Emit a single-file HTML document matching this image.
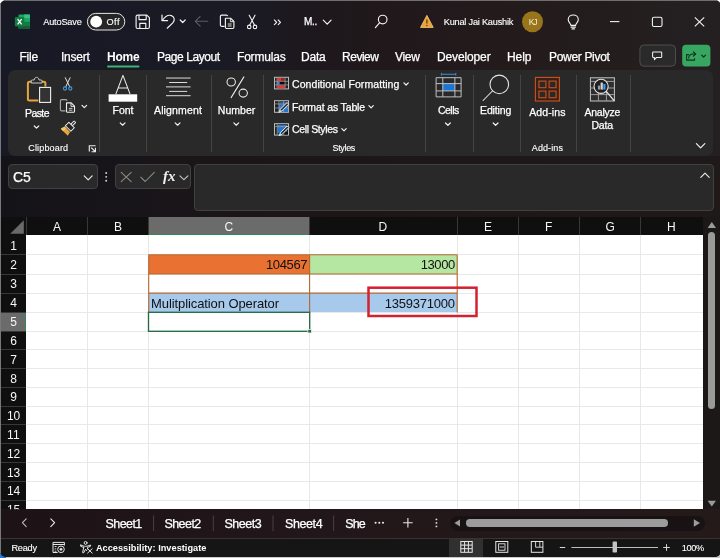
<!DOCTYPE html>
<html lang="en"><head><meta charset="utf-8"><title>Excel</title>
<style>
html,body{margin:0;padding:0;}
body{width:720px;height:558px;overflow:hidden;background:linear-gradient(180deg,#ffffff 0%,#ffffff 50%,#c9c9c9 100%);}
#win{position:absolute;left:0;top:0;width:720px;height:558px;overflow:hidden;}
.t{position:absolute;white-space:pre;display:block;}
.a{position:absolute;}
svg{position:absolute;overflow:visible;}
.sep{top:75px;width:1px;height:77px;background:#444444;}
.box{background:#292929;border:1px solid #414141;box-sizing:border-box;border-radius:4px;}
#txt{position:absolute;left:0;top:0;width:720px;height:558px;will-change:transform;}

</style></head>
<body>
<div id="win">
<!-- window chrome -->
<div class="a" id="bluecorner" style="left:0;top:549px;width:6px;height:9px;background:#2a78d6;"></div>
<div class="a" id="frame" style="left:0;top:0;width:720.5px;height:556.5px;border-radius:6px 6px 6px 6px;background:linear-gradient(90deg,#171925 0%,#1a1a24 32%,#1d181e 42%,#20181a 53%,#231b1c 75%,#242021 100%);"></div>
<div class="a" style="left:4px;top:0;width:712px;height:1px;background:#6f6f72;"></div>
<div class="a" style="left:0;top:3px;width:1px;height:550px;background:#77777c;"></div>

<!-- ribbon panel -->
<div class="a" id="ribbon" style="left:7.7px;top:69.8px;width:705.3px;height:86.4px;background:#292929;border-radius:7px;"></div>
<!-- ribbon separators -->
<div class="a sep" style="left:99px;"></div>
<div class="a sep" style="left:146px;"></div>
<div class="a sep" style="left:210.5px;"></div>
<div class="a sep" style="left:263px;"></div>
<div class="a sep" style="left:424.5px;"></div>
<div class="a sep" style="left:472.5px;"></div>
<div class="a sep" style="left:519.5px;"></div>
<div class="a sep" style="left:575.5px;"></div>
<div class="a sep" style="left:629.5px;"></div>

<!-- formula bar area -->
<div class="a" style="left:1px;top:156px;width:719px;height:61px;background:linear-gradient(90deg,#141318 0%,#18151a 18%,#1b1517 32%,#1d1717 60%,#1f1919 100%);"></div>
<div class="a box" style="left:8px;top:164px;width:89.6px;height:25px;"></div>
<div class="a box" style="left:115px;top:164px;width:75.6px;height:25px;"></div>
<div class="a box" style="left:194px;top:164px;width:520px;height:47px;"></div>

<!-- grid -->
<div class="a" id="grid" style="left:1px;top:217px;width:701.6px;height:292px;background:#fff;"></div>
<!-- column header strip -->
<div class="a" style="left:1px;top:217px;width:701.6px;height:18.3px;background:#0f0f0f;"></div>
<!-- row header strip -->
<div class="a" style="left:1px;top:217px;width:25.2px;height:292px;background:#0f0f0f;"></div>
<!-- selected headers -->
<div class="a" style="left:148.3px;top:217px;width:161.2px;height:18.3px;background:#6b6b6b;border-bottom:1.5px solid #2e8b57;box-sizing:border-box;"></div>
<div class="a" style="left:1px;top:312.3px;width:25.2px;height:19.0px;background:#6b6b6b;border-right:1.5px solid #2e8b57;box-sizing:border-box;"></div>
<!-- select-all triangle -->
<svg style="left:1px;top:217px" width="26" height="19" viewBox="0 0 26 19"><path d="M22.8 3.2 L22.8 16.8 L9.2 16.8 Z" fill="#6a6a6a"/></svg>
<!-- header separators + grid lines (svg) -->
<svg id="lines" style="left:0;top:0" width="720" height="558" viewBox="0 0 720 558" shape-rendering="crispEdges">
<g stroke="#e8e8e8" stroke-width="1">
<line x1="87.5" y1="235.3" x2="87.5" y2="509"/>
<line x1="148.3" y1="235.3" x2="148.3" y2="509"/>
<line x1="309.5" y1="235.3" x2="309.5" y2="509"/>
<line x1="457.3" y1="235.3" x2="457.3" y2="509"/>
<line x1="518.5" y1="235.3" x2="518.5" y2="509"/>
<line x1="579.6" y1="235.3" x2="579.6" y2="509"/>
<line x1="640.7" y1="235.3" x2="640.7" y2="509"/>
<line x1="26.2" y1="254.7" x2="702.6" y2="254.7"/>
<line x1="26.2" y1="274.0" x2="702.6" y2="274.0"/>
<line x1="26.2" y1="293.1" x2="702.6" y2="293.1"/>
<line x1="26.2" y1="312.3" x2="702.6" y2="312.3"/>
<line x1="26.2" y1="331.3" x2="702.6" y2="331.3"/>
<line x1="26.2" y1="349.8" x2="702.6" y2="349.8"/>
<line x1="26.2" y1="368.5" x2="702.6" y2="368.5"/>
<line x1="26.2" y1="387.3" x2="702.6" y2="387.3"/>
<line x1="26.2" y1="406.1" x2="702.6" y2="406.1"/>
<line x1="26.2" y1="424.9" x2="702.6" y2="424.9"/>
<line x1="26.2" y1="443.7" x2="702.6" y2="443.7"/>
<line x1="26.2" y1="462.5" x2="702.6" y2="462.5"/>
<line x1="26.2" y1="481.3" x2="702.6" y2="481.3"/>
<line x1="26.2" y1="500.3" x2="702.6" y2="500.3"/>
</g>
<g stroke="#383838" stroke-width="1">
<line x1="26.2" y1="217" x2="26.2" y2="235.3"/>
<line x1="87.5" y1="217" x2="87.5" y2="235.3"/>
<line x1="148.3" y1="217" x2="148.3" y2="235.3"/>
<line x1="309.5" y1="217" x2="309.5" y2="235.3"/>
<line x1="457.3" y1="217" x2="457.3" y2="235.3"/>
<line x1="518.5" y1="217" x2="518.5" y2="235.3"/>
<line x1="579.6" y1="217" x2="579.6" y2="235.3"/>
<line x1="640.7" y1="217" x2="640.7" y2="235.3"/>
<line x1="1" y1="254.7" x2="26.2" y2="254.7"/>
<line x1="1" y1="274.0" x2="26.2" y2="274.0"/>
<line x1="1" y1="293.1" x2="26.2" y2="293.1"/>
<line x1="1" y1="312.3" x2="26.2" y2="312.3"/>
<line x1="1" y1="331.3" x2="26.2" y2="331.3"/>
<line x1="1" y1="349.8" x2="26.2" y2="349.8"/>
<line x1="1" y1="368.5" x2="26.2" y2="368.5"/>
<line x1="1" y1="387.3" x2="26.2" y2="387.3"/>
<line x1="1" y1="406.1" x2="26.2" y2="406.1"/>
<line x1="1" y1="424.9" x2="26.2" y2="424.9"/>
<line x1="1" y1="443.7" x2="26.2" y2="443.7"/>
<line x1="1" y1="462.5" x2="26.2" y2="462.5"/>
<line x1="1" y1="481.3" x2="26.2" y2="481.3"/>
<line x1="1" y1="500.3" x2="26.2" y2="500.3"/>
</g>
</svg>

<!-- cell fills -->
<div class="a" style="left:148.5px;top:254.7px;width:161px;height:19.3px;background:#e97132;"></div>
<div class="a" style="left:309.8px;top:254.7px;width:147.4px;height:19.3px;background:#b5e6a2;"></div>
<div class="a" style="left:148.5px;top:293.1px;width:161px;height:19.2px;background:#a6c9ec;"></div>
<div class="a" style="left:309.8px;top:293.1px;width:147.4px;height:19.2px;background:#a6c9ec;"></div>
<!-- brown borders -->
<svg style="left:0;top:0" width="720" height="558" viewBox="0 0 720 558">
<g stroke="#b5682f" stroke-width="1.1" fill="none">
<path d="M148.5 254.7 H457.3 M148.5 274.0 H457.3 M148.5 293.1 H457.3 M148.7 254.39999999999998 V312.3 M309.6 254.39999999999998 V312.3 M457.2 254.39999999999998 V312.6"/>
</g>
<!-- selection -->
<rect x="148.5" y="312.3" width="161.2" height="19.0" fill="none" stroke="#226b45" stroke-width="1.35"/>
<rect x="307.9" y="329.4" width="3.6" height="3.6" fill="#226b45" stroke="#fff" stroke-width="0.7"/>
<!-- red highlight box -->
<rect x="368.5" y="287.7" width="108" height="28.3" fill="none" stroke="#d4202f" stroke-width="2.5"/>
</svg>

<!-- vertical scrollbar -->
<div class="a" style="left:702.6px;top:217px;width:18px;height:292px;background:#1c1818;"></div>
<div class="a" style="left:708.3px;top:232px;width:7px;height:177px;border-radius:3.5px;background:#9a9a9a;"></div>
<svg style="left:0;top:0" width="720" height="558" viewBox="0 0 720 558">
<path d="M711.8 222 L716 228 L707.6 228 Z" fill="#9a9a9a"/>
<path d="M711.8 506.6 L716 500.8 L707.6 500.8 Z" fill="#9a9a9a"/>
</svg>

<!-- sheet tab bar -->
<div class="a" style="left:1px;top:509px;width:719px;height:28.5px;background:linear-gradient(90deg,#1d1316 0%,#21171a 40%,#241a1a 100%);"></div>
<div class="a" style="left:450px;top:515.5px;width:255px;height:15.5px;border-radius:7.5px;background:#181214;"></div>
<div class="a" style="left:465.5px;top:519.2px;width:202.3px;height:7.5px;border-radius:3.75px;background:#9c9c9c;"></div>
<!-- status bar -->
<div class="a" style="left:1px;top:537.5px;width:719px;height:19px;background:#151515;border-top:1px solid #3a3234;box-sizing:border-box;border-radius:0 0 5px 5px;"></div>
<div class="a" style="left:449.4px;top:538.5px;width:33.6px;height:18px;background:#303030;"></div>

<svg style="left:0;top:0" width="720" height="70" viewBox="0 0 720 70" fill="none">
<!-- excel logo -->
<g>
<rect x="18.5" y="14.5" width="11.4" height="14.6" rx="1" fill="#21a366"/>
<rect x="24.2" y="14.5" width="5.7" height="3.7" fill="#33c481"/>
<rect x="24.2" y="18.2" width="5.7" height="3.6" fill="#21a366"/>
<rect x="24.2" y="21.8" width="5.7" height="3.7" fill="#107c41"/>
<rect x="18.5" y="25.5" width="11.4" height="3.6" rx="1" fill="#185c37"/>
<rect x="18.5" y="21.8" width="5.7" height="3.7" fill="#107c41"/>
<rect x="14.9" y="17" width="9.4" height="9.6" rx="1" fill="#107c41"/>
<path d="M17.6 19.2 L21.6 24.4 M21.6 19.2 L17.6 24.4" stroke="#fff" stroke-width="1.3"/>
</g>
<!-- autosave toggle -->
<rect x="87.4" y="13.4" width="37.4" height="16.6" rx="8.3" fill="#262626" stroke="#e6e6e6" stroke-width="1"/>
<circle cx="96.2" cy="21.7" r="5.9" fill="#fff"/>
<!-- save icon -->
<g stroke="#f2f2f2" stroke-width="1.15" stroke-linejoin="round">
<path d="M137.6 15.1 H146.8 L149.4 17.7 V27 Q149.4 28.5 147.9 28.5 H137.6 Q136.1 28.5 136.1 27 V16.6 Q136.1 15.1 137.6 15.1 Z"/>
<path d="M139 15.1 V19.6 H146.2 V15.1"/>
<path d="M139.8 28.5 V23.4 H145.8 V28.5"/>
</g>
<!-- undo -->
<g stroke="#f2f2f2" stroke-width="1.2" stroke-linecap="round" stroke-linejoin="round">
<path d="M162 15 V20.6 H167.6"/>
<path d="M162.4 20.3 C165 16.6 168.6 14.6 171.4 15.6 C174.6 16.8 175.2 20.4 172.8 22.8 L167.2 28.2"/>
<path d="M180.2 20 L182.7 22.5 L185.2 20" stroke-width="1.2"/>
</g>
<!-- back arrow (disabled) -->
<path d="M207.8 21.3 H195.4 M200.2 16.4 L195.3 21.3 L200.2 26.2" stroke="#5c5c62" stroke-width="1.1" stroke-linecap="round" stroke-linejoin="round"/>
<!-- copy -->
<g stroke="#f2f2f2" stroke-width="1.15" stroke-linejoin="round">
<path d="M224.6 26.3 H221.6 Q220.4 26.3 220.4 25.1 V16.3 Q220.4 15.1 221.6 15.1 H226.4 Q227.4 15.1 227.6 16.2"/>
<path d="M225.4 18.2 H230.6 L233.9 21.5 V27.3 Q233.9 28.5 232.7 28.5 H226.6 Q225.4 28.5 225.4 27.3 Z" fill="#1c1b20"/>
<path d="M230.4 18.4 V21.7 H233.7" stroke-width="0.9"/>
<path d="M227.8 24 H231.6 M227.8 26 H231.6" stroke-width="0.9"/>
</g>
<!-- scissors -->
<g stroke="#f2f2f2" stroke-width="1.1" stroke-linecap="round">
<path d="M249.2 15.2 L254.6 25.2 M255 15.2 L249.6 25.2"/>
<circle cx="249.2" cy="26.9" r="1.75"/>
<circle cx="255" cy="26.9" r="1.75"/>
</g>
<!-- >> -->
<path d="M274.4 20 L276.7 22.3 L274.4 24.6 M278.2 20 L280.5 22.3 L278.2 24.6" stroke="#f2f2f2" stroke-width="1.1" stroke-linecap="round" stroke-linejoin="round"/>
<!-- chevron after M.. -->
<path d="M323.3 20.2 L327.2 24.2 L331.1 20.2" stroke="#f2f2f2" stroke-width="1.2" stroke-linecap="round" stroke-linejoin="round"/>
<!-- search -->
<g stroke="#f2f2f2" stroke-width="1.15" stroke-linecap="round">
<circle cx="382.7" cy="19.5" r="4.3"/>
<path d="M379.7 22.7 L375.4 27.7"/>
</g>
<!-- warning -->
<path d="M426.9 15.4 L433.2 27.4 H420.6 Z" fill="#e8a33b" stroke="#f3c170" stroke-width="0.9" stroke-linejoin="round"/>
<path d="M426.9 19.4 V23.6" stroke="#5a3a12" stroke-width="1.3"/>
<circle cx="426.9" cy="25.5" r="0.75" fill="#5a3a12"/>
<!-- avatar -->
<circle cx="532.5" cy="21.75" r="10.5" fill="#98751a"/>
<!-- lightbulb -->
<g stroke="#f2f2f2" stroke-width="1.1" stroke-linecap="round" stroke-linejoin="round">
<path d="M570.9 25.4 C570.9 23.4 568.2 22.6 568.2 19.6 C568.2 16.8 570.5 15 573.25 15 C576 15 578.3 16.8 578.3 19.6 C578.3 22.6 575.6 23.4 575.6 25.4 Z"/>
<path d="M571 27.1 H575.5 M572 28.9 H574.5"/>
</g>
<!-- window controls -->
<path d="M610 21.6 H619.4" stroke="#f2f2f2" stroke-width="1.1"/>
<rect x="652.4" y="17.3" width="9.6" height="9.2" rx="1.6" stroke="#f2f2f2" stroke-width="1.1"/>
<path d="M694.8 17.4 L704.2 26.4 M704.2 17.4 L694.8 26.4" stroke="#f2f2f2" stroke-width="1.1"/>
<!-- home underline -->
<rect x="107" y="65.6" width="32.5" height="2" rx="1" fill="#3fb276"/>
<!-- comments button -->
<rect x="639.9" y="45" width="35.6" height="21.2" rx="4" fill="#2a2a2a" stroke="#4e4e4e" stroke-width="1"/>
<path d="M653.2 51.9 H661.1 Q661.7 51.9 661.7 52.5 V56.8 Q661.7 57.4 661.1 57.4 H656.6 L654.4 59.7 V57.4 H653.2 Q652.6 57.4 652.6 56.8 V52.5 Q652.6 51.9 653.2 51.9 Z" stroke="#f2f2f2" stroke-width="1.05" stroke-linejoin="round"/>
<!-- share button -->
<rect x="682.2" y="44.7" width="28.2" height="21.8" rx="3.8" fill="#37a660"/>
<g stroke="#13301f" stroke-width="1.05" stroke-linecap="round" stroke-linejoin="round">
<path d="M688.6 54.6 H686.6 V60.1 H694.6 V58.4"/>
<path d="M688.6 58.2 C689 55.6 690.6 54 693 54 H695.4 M693.4 51.8 L695.7 54 L693.4 56.2"/>
<path d="M701.6 55.1 L703.6 57 L705.6 55.1" stroke-width="1.2"/>
</g>
</svg>

<svg style="left:0;top:0" width="720" height="160" viewBox="0 0 720 160" fill="none">
<!-- paste: clipboard -->
<path d="M38.4 100.4 H29.4 Q27.9 100.4 27.9 98.9 V83.2 Q27.9 81.7 29.4 81.7 H43.9 Q45.4 81.7 45.4 83.2 V86.4" stroke="#e8a33b" stroke-width="2" stroke-linejoin="round"/>
<path d="M31.2 83 V81 Q31.2 80 32.2 80 H34.2 C34.4 78.2 35.3 77.3 36.6 77.3 C37.9 77.3 38.8 78.2 39 80 H41 Q42 80 42 81 V83 Z" stroke="#c8c8c8" stroke-width="1" fill="#292929" stroke-linejoin="round"/>
<rect x="39.6" y="87.4" width="11" height="15" fill="#333333" stroke="#f0f0f0" stroke-width="1.1"/>
<path d="M34.3 126 L36.5 128.2 L38.7 126" stroke="#f2f2f2" stroke-width="1.2" stroke-linecap="round" stroke-linejoin="round"/>
<!-- cut -->
<g stroke-linecap="round">
<path d="M65.3 77.7 L69.6 86.6 M70.1 77.7 L65.8 86.6" stroke="#e4e4e4" stroke-width="1"/>
<circle cx="65" cy="88.5" r="1.6" stroke="#3c9ae8" stroke-width="1.1"/>
<circle cx="70.3" cy="88.5" r="1.6" stroke="#3c9ae8" stroke-width="1.1"/>
</g>
<!-- copy -->
<g stroke-linejoin="round">
<path d="M65.4 110.9 H61.6 Q60.4 110.9 60.4 109.7 V100.8 Q60.4 99.6 61.6 99.6 H65.8 Q66.9 99.6 67.1 100.8" stroke="#a8a8a8" stroke-width="1.1"/>
<path d="M66.5 102.9 H71.2 L74.5 106.2 V111.2 Q74.5 112.3 73.4 112.3 H67.6 Q66.5 112.3 66.5 111.2 Z" stroke="#f0f0f0" stroke-width="1.1" fill="#2c2c2c"/>
<path d="M71 103.1 V106.4 H74.3" stroke="#f0f0f0" stroke-width="0.9"/>
<path d="M68.8 108.4 H72.4 M68.8 110.2 H72.4" stroke="#d8d8d8" stroke-width="0.9"/>
</g>
<path d="M82 105.4 L84.3 107.7 L86.6 105.4" stroke="#f2f2f2" stroke-width="1.2" stroke-linecap="round" stroke-linejoin="round"/>
<!-- format painter: drawn upright then rotated 45deg -->
<g transform="translate(68.3 128.3) rotate(45)">
<rect x="-1.15" y="-9.3" width="2.3" height="4.6" rx="0.5" stroke="#f0f0f0" stroke-width="0.95" fill="#292929"/>
<path d="M-3.9 -4.7 H3.9 V0.3 H-3.9 Z" stroke="#f0f0f0" stroke-width="0.95" fill="#262626" stroke-linejoin="round"/>
<path d="M-3.9 1.4 H3.9 L4.9 5.7 H-4.9 Z" fill="#e8a33b"/>
<path d="M-3.9 1.4 L-4.9 5.7 H-1.6 L-1.2 1.4 Z" fill="#f3c468"/>
</g>
<!-- launcher -->
<g stroke="#ececec" stroke-width="1.15" stroke-linecap="square">
<path d="M89.3 151 V145.7 H95"/>
<path d="M91.6 148 L95 151.4 M95.4 148.4 V151.7 H92.1"/>
</g>
<!-- font A -->
<path d="M116 93.6 L122.95 75.4 L129.9 93.6 M118.3 88 H127.7" stroke="#ececec" stroke-width="1.05" stroke-linejoin="round" stroke-linecap="round"/>
<rect x="108.6" y="94.3" width="28.6" height="7.4" fill="#ffffff"/>
<path d="M120.2 122.9 L122.6 125.2 L125 122.9" stroke="#f2f2f2" stroke-width="1.2" stroke-linecap="round" stroke-linejoin="round"/>
<!-- alignment -->
<g stroke="#dcdcdc" stroke-width="1">
<path d="M166 78.05 H190.6 M169.2 82.5 H187.2 M166 86.9 H190.6 M169.2 91.4 H187.2 M166 95.7 H190.6"/>
</g>
<path d="M175.2 122.9 L177.6 125.2 L180 122.9" stroke="#f2f2f2" stroke-width="1.2" stroke-linecap="round" stroke-linejoin="round"/>
<!-- percent -->
<g stroke="#ececec" stroke-width="1.05">
<ellipse cx="231.2" cy="82" rx="4.2" ry="4"/>
<ellipse cx="243.2" cy="93.1" rx="4.2" ry="4"/>
<path d="M243.9 76.9 L231.1 97.6" stroke-linecap="round"/>
</g>
<path d="M233.85 122.9 L236.25 125.2 L238.65 122.9" stroke="#f2f2f2" stroke-width="1.2" stroke-linecap="round" stroke-linejoin="round"/>
<!-- conditional formatting icon -->
<g>
<rect x="274.5" y="77.3" width="14" height="11.6" fill="#222222" stroke="#bdbdbd" stroke-width="1"/>
<rect x="277.4" y="77.9" width="3.6" height="3.2" fill="#e23838"/>
<rect x="281" y="77.9" width="3.8" height="3.2" fill="#8c2a2a"/>
<rect x="277" y="81.6" width="2.6" height="3" fill="#3b83d6"/>
<rect x="280" y="81.6" width="4.8" height="3" fill="#0c0c0c"/>
<rect x="277.4" y="85.2" width="7.4" height="3.2" fill="#e23838"/>
<path d="M277 77.3 V88.9 M285.1 77.3 V88.9 M274.5 81.3 H288.5 M274.5 84.9 H288.5" stroke="#9a9a9a" stroke-width="0.8"/>
</g>
<!-- format as table icon -->
<g>
<rect x="274.5" y="100.7" width="14" height="11.6" fill="#222222" stroke="#bdbdbd" stroke-width="1"/>
<rect x="279" y="103.8" width="9.2" height="8.2" fill="#2277cf"/>
<rect x="280" y="101.6" width="7" height="2" fill="#1f5e9e"/>
<path d="M274.5 103.9 H288.5 M274.5 108 H288.5 M278.9 100.7 V112.3 M283.6 100.7 V112.3" stroke="#9a9a9a" stroke-width="0.8"/>
<g transform="translate(283.6 107.6) rotate(45)">
<path d="M-1.15 -6 H1.15 V3.6 L0 6.6 L-1.15 3.6 Z" fill="#2a2a2a" stroke="#ffffff" stroke-width="0.9" stroke-linejoin="round"/>
<path d="M-1.1 3.8 L0 6.6 L1.1 3.8 Z" fill="#9fd0f5"/>
</g>
</g>
<!-- cell styles icon -->
<g>
<rect x="274.5" y="123.7" width="14" height="11.4" fill="#222222" stroke="#bdbdbd" stroke-width="1"/>
<rect x="277.6" y="125" width="9.4" height="8.2" fill="#2277cf"/>
<path d="M277.2 123.7 V135.1 M274.5 126.6 H288.5" stroke="#9a9a9a" stroke-width="0.8"/>
<rect x="284.6" y="131.6" width="3.4" height="3" fill="#111111"/>
<g transform="translate(283.8 131) rotate(45)">
<path d="M-1.15 -6 H1.15 V3.6 L0 6.6 L-1.15 3.6 Z" fill="#2a2a2a" stroke="#ffffff" stroke-width="0.9" stroke-linejoin="round"/>
<path d="M-1.1 3.8 L0 6.6 L1.1 3.8 Z" fill="#9fd0f5"/>
</g>
</g>
<!-- small chevrons after style items -->
<g stroke="#f2f2f2" stroke-width="1.2" stroke-linecap="round" stroke-linejoin="round">
<path d="M403.9 82.8 L406.1 85 L408.3 82.8"/>
<path d="M368.9 105.6 L371.1 107.8 L373.3 105.6"/>
<path d="M341.8 128.6 L344 130.8 L346.2 128.6"/>
</g>
<!-- cells icon -->
<g>
<path d="M441.4 74.25 H455.8 M441.4 72.9 V75.6 M455.8 72.9 V75.6" stroke="#3c8fdc" stroke-width="1"/>
<rect x="442.8" y="83.6" width="12.1" height="7.3" fill="#1a76d2"/>
<path d="M436.1 77.7 H461.1 V96.9 H436.1 Z M442.8 77.7 V96.9 M454.9 77.7 V96.9 M436.1 83.6 H461.1 M436.1 90.9 H461.1" stroke="#c0c0c0" stroke-width="1"/>
</g>
<path d="M445.5 123 L447.9 125.3 L450.3 123" stroke="#f2f2f2" stroke-width="1.2" stroke-linecap="round" stroke-linejoin="round"/>
<!-- editing magnifier -->
<g stroke="#e8e8e8" stroke-width="1.05" stroke-linecap="round">
<circle cx="499.3" cy="84.4" r="9.3"/>
<path d="M492.4 91 L483.1 100.5"/>
</g>
<path d="M493.2 123 L495.6 125.3 L498 123" stroke="#f2f2f2" stroke-width="1.2" stroke-linecap="round" stroke-linejoin="round"/>
<!-- add-ins icon -->
<g stroke="#c9531f" stroke-width="1.1">
<rect x="535.4" y="77.4" width="24" height="23.6" fill="#3a2118"/>
<rect x="538.9" y="81.1" width="7" height="6.6" fill="#292929"/>
<rect x="549.1" y="81.1" width="7" height="6.6" fill="#292929"/>
<rect x="538.9" y="91.1" width="7" height="6.6" fill="#292929"/>
<rect x="549.1" y="91.1" width="7" height="6.6" fill="#292929"/>
</g>
<!-- analyze data icon -->
<g>
<rect x="590.4" y="77.8" width="24" height="23.2" fill="#2e2e2e" stroke="#c4c4c4" stroke-width="1"/>
<path d="M590.4 81.4 H614.4 M590.4 88 H614.4 M590.4 94.6 H614.4 M598.4 81.4 V101 M606.4 81.4 V101" stroke="#a8a8a8" stroke-width="0.9"/>
<circle cx="601.1" cy="86.3" r="7.1" fill="#1f1f1f" stroke="#e6e6e6" stroke-width="1.1"/>
<path d="M606.4 91.6 L613.9 100.4" stroke="#e6e6e6" stroke-width="1.3" stroke-linecap="round"/>
<rect x="597.9" y="85.6" width="2.2" height="4" fill="#9a9a9a"/>
<rect x="600.6" y="82.6" width="2.2" height="7" fill="#d6d6d6"/>
<rect x="603.3" y="84" width="2.2" height="5.6" fill="#3c9ae8"/>
</g>
<!-- collapse ribbon chevron -->
<path d="M696.4 143.6 L700.6 147.8 L704.8 143.6" stroke="#f2f2f2" stroke-width="1.2" stroke-linecap="round" stroke-linejoin="round"/>
</svg>

<svg style="left:0;top:0" width="720" height="558" viewBox="0 0 720 558" fill="none">
<!-- name box chevron -->
<path d="M84.2 175.8 L88.2 179.8 L92.2 175.8" stroke="#e8e8e8" stroke-width="1.2" stroke-linecap="round" stroke-linejoin="round"/>
<!-- dots -->
<g fill="#d8d8d8"><circle cx="106.2" cy="173" r="0.95"/><circle cx="106.2" cy="176.85" r="0.95"/><circle cx="106.2" cy="180.7" r="0.95"/></g>
<!-- cancel / enter -->
<path d="M121.2 172.3 L131.2 181.6 M131.2 172.3 L121.2 181.6" stroke="#8c8c8c" stroke-width="1.05" stroke-linecap="round"/>
<path d="M140.8 177.2 L145.2 181.5 L154.3 172.4" stroke="#8c8c8c" stroke-width="1.05" stroke-linecap="round" stroke-linejoin="round"/>
<path d="M179.9 175.8 L183.9 179.6 L187.9 175.8" stroke="#c8c8c8" stroke-width="1.1" stroke-linecap="round" stroke-linejoin="round"/>
<!-- formula bar collapse chevron -->
<path d="M700.8 177.4 L705 173.2 L709.2 177.4" stroke="#e8e8e8" stroke-width="1.2" stroke-linecap="round" stroke-linejoin="round"/>
<!-- sheet nav -->
<path d="M26.2 518.8 L22.4 522.7 L26.2 526.6" stroke="#bdbdbd" stroke-width="1.1" stroke-linecap="round" stroke-linejoin="round"/>
<path d="M50.8 518.8 L54.6 522.7 L50.8 526.6" stroke="#e8e8e8" stroke-width="1.1" stroke-linecap="round" stroke-linejoin="round"/>
<!-- tab separators -->
<g stroke="#4a3f41" stroke-width="1"><path d="M153.6 515.5 V531 M213.3 515.5 V531 M273 515.5 V531 M333.6 515.5 V531"/></g>
<!-- ... + and dots -->
<g fill="#e8e8e8"><circle cx="375.6" cy="522.8" r="1.05"/><circle cx="379.3" cy="522.8" r="1.05"/><circle cx="383" cy="522.8" r="1.05"/></g>
<path d="M403.1 522.8 H412.7 M407.9 518 V527.6" stroke="#e8e8e8" stroke-width="1.1"/>
<g fill="#d8d8d8"><circle cx="436.4" cy="519.4" r="0.95"/><circle cx="436.4" cy="522.9" r="0.95"/><circle cx="436.4" cy="526.4" r="0.95"/></g>
<!-- h scroll arrows -->
<path d="M454.4 523 L460 519.4 V526.6 Z" fill="#9c9c9c"/>
<path d="M700 523 L693.8 519.2 V526.8 Z" fill="#9c9c9c"/>
<!-- status icons placeholder group -->

<!-- macro record icon -->
<g stroke="#e6e6e6" stroke-width="1" >
<path d="M57.6 552.5 H53 V542.4 H64.4 V545.6"/>
<path d="M53 544.5 H64.4"/>
<path d="M54.6 546.5 H56.6 M54.6 548.9 H56.2 M54.6 551.2 H56.4" stroke-width="0.9"/>
<circle cx="61" cy="549.3" r="3.3" fill="#171717"/>
<circle cx="61" cy="549.3" r="1.4" fill="#e6e6e6" stroke="none"/>
</g>
<!-- accessibility icon -->
<g stroke="#e6e6e6" stroke-width="1" stroke-linecap="round" stroke-linejoin="round">
<circle cx="85.6" cy="542.9" r="1.45"/>
<path d="M80.8 545 C82.4 545.9 84 546.3 85.6 546.3 C87.2 546.3 88.8 545.9 90.4 545 L90.8 546 C89.6 546.8 88.4 547.2 87.5 547.4 L87.6 549 M83.7 547.4 C82.8 547.2 81.6 546.8 80.4 546 L80.8 545 M83.7 547.4 L82.6 552.6 L83.6 552.9 L85.6 549.2 L86.6 550.6"/>
<path d="M87.6 548.7 L92.2 553.1 M92.2 548.7 L87.6 553.1" stroke-width="1"/>
</g>
<!-- view buttons -->
<g stroke="#e6e6e6" stroke-width="1">
<rect x="460.8" y="541.5" width="11.4" height="10.8"/>
<path d="M464.6 541.5 V552.3 M468.4 541.5 V552.3 M460.8 545.1 H472.2 M460.8 548.7 H472.2"/>
<rect x="495.8" y="541.5" width="12" height="10.8"/>
<rect x="498.6" y="543.8" width="6.4" height="6.4" stroke-width="0.9"/>
<path d="M499.6 547 H504" stroke-width="0.9"/>
<rect x="531.3" y="541.5" width="11.6" height="10.8"/>
<path d="M535.6 541.5 V547.2 H539.8 V541.5 M539.8 547.2 H542.9" stroke-width="0.9"/>
</g>
<!-- zoom slider -->
<g stroke="#d8d8d8" stroke-width="1">
<path d="M559.8 547.5 H565.2"/>
<path d="M571.4 547.5 H658" stroke="#bdbdbd"/>
<path d="M663.2 547.5 H669.8 M666.5 544.2 V550.8"/>
</g>
<rect x="612.6" y="541.6" width="4.4" height="11" rx="0.8" fill="#c4c4c4"/>

</svg>


<div id="txt">
<span class="t" style="left:43.2px;top:18.10px;font-family:'Liberation Sans', sans-serif;font-size:9.2px;line-height:9.2px;font-weight:400;color:#fff;letter-spacing:-0.17px;-webkit-text-stroke:0.12px #fff;">AutoSave</span>
<span class="t" style="left:106.5px;top:18.00px;font-family:'Liberation Sans', sans-serif;font-size:9.2px;line-height:9.2px;font-weight:400;color:#fff;letter-spacing:0.47px;-webkit-text-stroke:0.12px #fff;">Off</span>
<span class="t" style="left:303.9px;top:17.40px;font-family:'Liberation Sans', sans-serif;font-size:10px;line-height:10px;font-weight:400;color:#fff;letter-spacing:-0.26px;-webkit-text-stroke:0.25px #fff;">M..</span>
<span class="t" style="left:443.8px;top:18.10px;font-family:'Liberation Sans', sans-serif;font-size:9.2px;line-height:9.2px;font-weight:400;color:#fff;letter-spacing:-0.22px;-webkit-text-stroke:0.12px #fff;">Kunal Jai Kaushik</span>
<span class="t" style="left:528.8px;top:17.90px;font-family:'Liberation Sans', sans-serif;font-size:8.6px;line-height:8.6px;font-weight:400;color:#f4ecd8;letter-spacing:-1.27px;">KJ</span>
<span class="t" style="left:19.5px;top:51.00px;font-family:'Liberation Sans', sans-serif;font-size:12px;line-height:12px;font-weight:400;color:#fff;letter-spacing:-0.21px;-webkit-text-stroke:0.25px #fff;">File</span>
<span class="t" style="left:61.0px;top:51.00px;font-family:'Liberation Sans', sans-serif;font-size:12px;line-height:12px;font-weight:400;color:#fff;letter-spacing:-0.25px;-webkit-text-stroke:0.25px #fff;">Insert</span>
<span class="t" style="left:107.0px;top:51.00px;font-family:'Liberation Sans', sans-serif;font-size:12px;line-height:12px;font-weight:700;color:#fff;letter-spacing:-0.21px;">Home</span>
<span class="t" style="left:157.0px;top:51.00px;font-family:'Liberation Sans', sans-serif;font-size:12px;line-height:12px;font-weight:400;color:#fff;letter-spacing:-0.44px;-webkit-text-stroke:0.25px #fff;">Page Layout</span>
<span class="t" style="left:237.0px;top:51.00px;font-family:'Liberation Sans', sans-serif;font-size:12px;line-height:12px;font-weight:400;color:#fff;letter-spacing:-0.19px;-webkit-text-stroke:0.25px #fff;">Formulas</span>
<span class="t" style="left:301.0px;top:51.00px;font-family:'Liberation Sans', sans-serif;font-size:12px;line-height:12px;font-weight:400;color:#fff;letter-spacing:-0.21px;-webkit-text-stroke:0.25px #fff;">Data</span>
<span class="t" style="left:342.0px;top:51.00px;font-family:'Liberation Sans', sans-serif;font-size:12px;line-height:12px;font-weight:400;color:#fff;letter-spacing:-0.48px;-webkit-text-stroke:0.25px #fff;">Review</span>
<span class="t" style="left:395.0px;top:51.00px;font-family:'Liberation Sans', sans-serif;font-size:12px;line-height:12px;font-weight:400;color:#fff;letter-spacing:-0.32px;-webkit-text-stroke:0.25px #fff;">View</span>
<span class="t" style="left:437.0px;top:51.00px;font-family:'Liberation Sans', sans-serif;font-size:12px;line-height:12px;font-weight:400;color:#fff;letter-spacing:-0.13px;-webkit-text-stroke:0.25px #fff;">Developer</span>
<span class="t" style="left:507.0px;top:51.00px;font-family:'Liberation Sans', sans-serif;font-size:12px;line-height:12px;font-weight:400;color:#fff;letter-spacing:-0.05px;-webkit-text-stroke:0.25px #fff;">Help</span>
<span class="t" style="left:549.0px;top:51.00px;font-family:'Liberation Sans', sans-serif;font-size:12px;line-height:12px;font-weight:400;color:#fff;letter-spacing:-0.32px;-webkit-text-stroke:0.25px #fff;">Power Pivot</span>
<span class="t" style="left:25.0px;top:108.40px;font-family:'Liberation Sans', sans-serif;font-size:10.5px;line-height:10.5px;font-weight:400;color:#fff;letter-spacing:-0.59px;-webkit-text-stroke:0.25px #fff;">Paste</span>
<span class="t" style="left:28.3px;top:144.10px;font-family:'Liberation Sans', sans-serif;font-size:9px;line-height:9px;font-weight:400;color:#fff;letter-spacing:0.16px;-webkit-text-stroke:0.12px #fff;">Clipboard</span>
<span class="t" style="left:112.5px;top:105.40px;font-family:'Liberation Sans', sans-serif;font-size:10.5px;line-height:10.5px;font-weight:400;color:#fff;letter-spacing:-0.03px;-webkit-text-stroke:0.25px #fff;">Font</span>
<span class="t" style="left:154.0px;top:105.40px;font-family:'Liberation Sans', sans-serif;font-size:10.5px;line-height:10.5px;font-weight:400;color:#fff;letter-spacing:0.14px;-webkit-text-stroke:0.25px #fff;">Alignment</span>
<span class="t" style="left:217.8px;top:105.30px;font-family:'Liberation Sans', sans-serif;font-size:10.5px;line-height:10.5px;font-weight:400;color:#fff;letter-spacing:0.04px;-webkit-text-stroke:0.25px #fff;">Number</span>
<span class="t" style="left:292.0px;top:78.50px;font-family:'Liberation Sans', sans-serif;font-size:10.5px;line-height:10.5px;font-weight:400;color:#fff;letter-spacing:0.08px;-webkit-text-stroke:0.25px #fff;">Conditional Formatting</span>
<span class="t" style="left:292.0px;top:101.50px;font-family:'Liberation Sans', sans-serif;font-size:10.5px;line-height:10.5px;font-weight:400;color:#fff;letter-spacing:-0.14px;-webkit-text-stroke:0.25px #fff;">Format as Table</span>
<span class="t" style="left:292.0px;top:124.25px;font-family:'Liberation Sans', sans-serif;font-size:10.5px;line-height:10.5px;font-weight:400;color:#fff;letter-spacing:-0.37px;-webkit-text-stroke:0.25px #fff;">Cell Styles</span>
<span class="t" style="left:332.5px;top:144.30px;font-family:'Liberation Sans', sans-serif;font-size:9px;line-height:9px;font-weight:400;color:#fff;letter-spacing:-0.34px;-webkit-text-stroke:0.12px #fff;">Styles</span>
<span class="t" style="left:438.0px;top:105.10px;font-family:'Liberation Sans', sans-serif;font-size:10.5px;line-height:10.5px;font-weight:400;color:#fff;letter-spacing:-0.53px;-webkit-text-stroke:0.25px #fff;">Cells</span>
<span class="t" style="left:480.0px;top:105.10px;font-family:'Liberation Sans', sans-serif;font-size:10.5px;line-height:10.5px;font-weight:400;color:#fff;letter-spacing:-0.12px;-webkit-text-stroke:0.25px #fff;">Editing</span>
<span class="t" style="left:529.2px;top:107.00px;font-family:'Liberation Sans', sans-serif;font-size:10.5px;line-height:10.5px;font-weight:400;color:#fff;letter-spacing:0.1px;-webkit-text-stroke:0.25px #fff;">Add-ins</span>
<span class="t" style="left:531.8px;top:144.30px;font-family:'Liberation Sans', sans-serif;font-size:9px;line-height:9px;font-weight:400;color:#fff;letter-spacing:0.1px;-webkit-text-stroke:0.12px #fff;">Add-ins</span>
<span class="t" style="left:584.4px;top:107.00px;font-family:'Liberation Sans', sans-serif;font-size:10.5px;line-height:10.5px;font-weight:400;color:#fff;letter-spacing:-0.22px;-webkit-text-stroke:0.25px #fff;">Analyze</span>
<span class="t" style="left:591.4px;top:120.30px;font-family:'Liberation Sans', sans-serif;font-size:10.5px;line-height:10.5px;font-weight:400;color:#fff;letter-spacing:-0.2px;-webkit-text-stroke:0.25px #fff;">Data</span>
<span class="t" style="left:13.0px;top:170.00px;font-family:'Liberation Sans', sans-serif;font-size:14px;line-height:14px;font-weight:400;color:#fff;letter-spacing:-0.2px;-webkit-text-stroke:0.25px #fff;">C5</span>
<span class="t" style="left:163.0px;top:169.40px;font-family:'Liberation Serif', serif;font-size:15px;line-height:15px;font-weight:700;color:#f0f0f0;letter-spacing:-0.1px;font-style:italic;">fx</span>
<span class="t" style="left:52.9px;top:220.70px;font-family:'Liberation Sans', sans-serif;font-size:12px;line-height:12px;font-weight:400;color:#f6f6f6;letter-spacing:0.18px;">A</span>
<span class="t" style="left:113.9px;top:220.70px;font-family:'Liberation Sans', sans-serif;font-size:12px;line-height:12px;font-weight:400;color:#f6f6f6;letter-spacing:0.18px;">B</span>
<span class="t" style="left:224.6px;top:220.70px;font-family:'Liberation Sans', sans-serif;font-size:12px;line-height:12px;font-weight:400;color:#f6f6f6;letter-spacing:0.13px;">C</span>
<span class="t" style="left:378.6px;top:220.70px;font-family:'Liberation Sans', sans-serif;font-size:12px;line-height:12px;font-weight:400;color:#f6f6f6;letter-spacing:0.13px;">D</span>
<span class="t" style="left:483.9px;top:220.70px;font-family:'Liberation Sans', sans-serif;font-size:12px;line-height:12px;font-weight:400;color:#f6f6f6;letter-spacing:0.18px;">E</span>
<span class="t" style="left:544.9px;top:220.70px;font-family:'Liberation Sans', sans-serif;font-size:12px;line-height:12px;font-weight:400;color:#f6f6f6;letter-spacing:0.86px;">F</span>
<span class="t" style="left:605.6px;top:220.70px;font-family:'Liberation Sans', sans-serif;font-size:12px;line-height:12px;font-weight:400;color:#f6f6f6;letter-spacing:-0.54px;">G</span>
<span class="t" style="left:666.9px;top:220.70px;font-family:'Liberation Sans', sans-serif;font-size:12px;line-height:12px;font-weight:400;color:#f6f6f6;letter-spacing:-0.47px;">H</span>
<span class="t" style="left:10.2px;top:239.55px;font-family:'Liberation Sans', sans-serif;font-size:12px;line-height:12px;font-weight:400;color:#f6f6f6;letter-spacing:0.01px;">1</span>
<span class="t" style="left:10.2px;top:258.95px;font-family:'Liberation Sans', sans-serif;font-size:12px;line-height:12px;font-weight:400;color:#f6f6f6;letter-spacing:0.01px;">2</span>
<span class="t" style="left:10.2px;top:278.15px;font-family:'Liberation Sans', sans-serif;font-size:12px;line-height:12px;font-weight:400;color:#f6f6f6;letter-spacing:0.01px;">3</span>
<span class="t" style="left:10.2px;top:297.30px;font-family:'Liberation Sans', sans-serif;font-size:12px;line-height:12px;font-weight:400;color:#f6f6f6;letter-spacing:0.01px;">4</span>
<span class="t" style="left:10.2px;top:316.40px;font-family:'Liberation Sans', sans-serif;font-size:12px;line-height:12px;font-weight:400;color:#f6f6f6;letter-spacing:0.01px;">5</span>
<span class="t" style="left:10.2px;top:335.15px;font-family:'Liberation Sans', sans-serif;font-size:12px;line-height:12px;font-weight:400;color:#f6f6f6;letter-spacing:0.01px;">6</span>
<span class="t" style="left:10.2px;top:353.75px;font-family:'Liberation Sans', sans-serif;font-size:12px;line-height:12px;font-weight:400;color:#f6f6f6;letter-spacing:0.01px;">7</span>
<span class="t" style="left:10.2px;top:372.50px;font-family:'Liberation Sans', sans-serif;font-size:12px;line-height:12px;font-weight:400;color:#f6f6f6;letter-spacing:0.01px;">8</span>
<span class="t" style="left:10.2px;top:391.30px;font-family:'Liberation Sans', sans-serif;font-size:12px;line-height:12px;font-weight:400;color:#f6f6f6;letter-spacing:0.01px;">9</span>
<span class="t" style="left:7.0px;top:410.10px;font-family:'Liberation Sans', sans-serif;font-size:12px;line-height:12px;font-weight:400;color:#f6f6f6;letter-spacing:-0.23px;">10</span>
<span class="t" style="left:7.0px;top:428.90px;font-family:'Liberation Sans', sans-serif;font-size:12px;line-height:12px;font-weight:400;color:#f6f6f6;letter-spacing:0.22px;">11</span>
<span class="t" style="left:7.0px;top:447.70px;font-family:'Liberation Sans', sans-serif;font-size:12px;line-height:12px;font-weight:400;color:#f6f6f6;letter-spacing:-0.23px;">12</span>
<span class="t" style="left:7.0px;top:466.50px;font-family:'Liberation Sans', sans-serif;font-size:12px;line-height:12px;font-weight:400;color:#f6f6f6;letter-spacing:-0.23px;">13</span>
<span class="t" style="left:7.0px;top:485.40px;font-family:'Liberation Sans', sans-serif;font-size:12px;line-height:12px;font-weight:400;color:#f6f6f6;letter-spacing:-0.23px;">14</span>
<span class="t" style="left:7.0px;top:504.35px;font-family:'Liberation Sans', sans-serif;font-size:12px;line-height:12px;font-weight:400;color:#f6f6f6;letter-spacing:-0.23px;clip-path:inset(0 0 7.19px 0);">15</span>
<span class="t" style="left:266.0px;top:258.15px;font-family:'Liberation Sans', sans-serif;font-size:13px;line-height:13px;font-weight:400;color:#111111;letter-spacing:-0.37px;">104567</span>
<span class="t" style="left:420.8px;top:258.15px;font-family:'Liberation Sans', sans-serif;font-size:13px;line-height:13px;font-weight:400;color:#111111;letter-spacing:-0.45px;">13000</span>
<span class="t" style="left:384.7px;top:296.90px;font-family:'Liberation Sans', sans-serif;font-size:13px;line-height:13px;font-weight:400;color:#111111;letter-spacing:-0.23px;">1359371000</span>
<span class="t" style="left:151.0px;top:296.90px;font-family:'Liberation Sans', sans-serif;font-size:13px;line-height:13px;font-weight:400;color:#111111;letter-spacing:-0.09px;">Mulitplication Operator</span>
<span class="t" style="left:105.5px;top:518.30px;font-family:'Liberation Sans', sans-serif;font-size:12.5px;line-height:12.5px;font-weight:400;color:#fff;letter-spacing:-0.57px;-webkit-text-stroke:0.25px #fff;">Sheet1</span>
<span class="t" style="left:164.4px;top:518.30px;font-family:'Liberation Sans', sans-serif;font-size:12.5px;line-height:12.5px;font-weight:400;color:#fff;letter-spacing:-0.54px;-webkit-text-stroke:0.25px #fff;">Sheet2</span>
<span class="t" style="left:224.4px;top:518.30px;font-family:'Liberation Sans', sans-serif;font-size:12.5px;line-height:12.5px;font-weight:400;color:#fff;letter-spacing:-0.44px;-webkit-text-stroke:0.25px #fff;">Sheet3</span>
<span class="t" style="left:285.0px;top:518.30px;font-family:'Liberation Sans', sans-serif;font-size:12.5px;line-height:12.5px;font-weight:400;color:#fff;letter-spacing:-0.4px;-webkit-text-stroke:0.25px #fff;">Sheet4</span>
<span class="t" style="left:345.3px;top:518.30px;font-family:'Liberation Sans', sans-serif;font-size:12.5px;line-height:12.5px;font-weight:400;color:#fff;letter-spacing:-0.95px;-webkit-text-stroke:0.25px #fff;">She</span>
<span class="t" style="left:11.5px;top:543.80px;font-family:'Liberation Sans', sans-serif;font-size:9.2px;line-height:9.2px;font-weight:400;color:#fff;letter-spacing:-0.27px;-webkit-text-stroke:0.12px #fff;">Ready</span>
<span class="t" style="left:95.9px;top:543.80px;font-family:'Liberation Sans', sans-serif;font-size:9.2px;line-height:9.2px;font-weight:700;color:#fff;letter-spacing:0.03px;">Accessibility: Investigate</span>
<span class="t" style="left:681.7px;top:543.80px;font-family:'Liberation Sans', sans-serif;font-size:9.2px;line-height:9.2px;font-weight:400;color:#fff;letter-spacing:-0.33px;-webkit-text-stroke:0.12px #fff;">100%</span>
</div>
</div>
</body></html>
